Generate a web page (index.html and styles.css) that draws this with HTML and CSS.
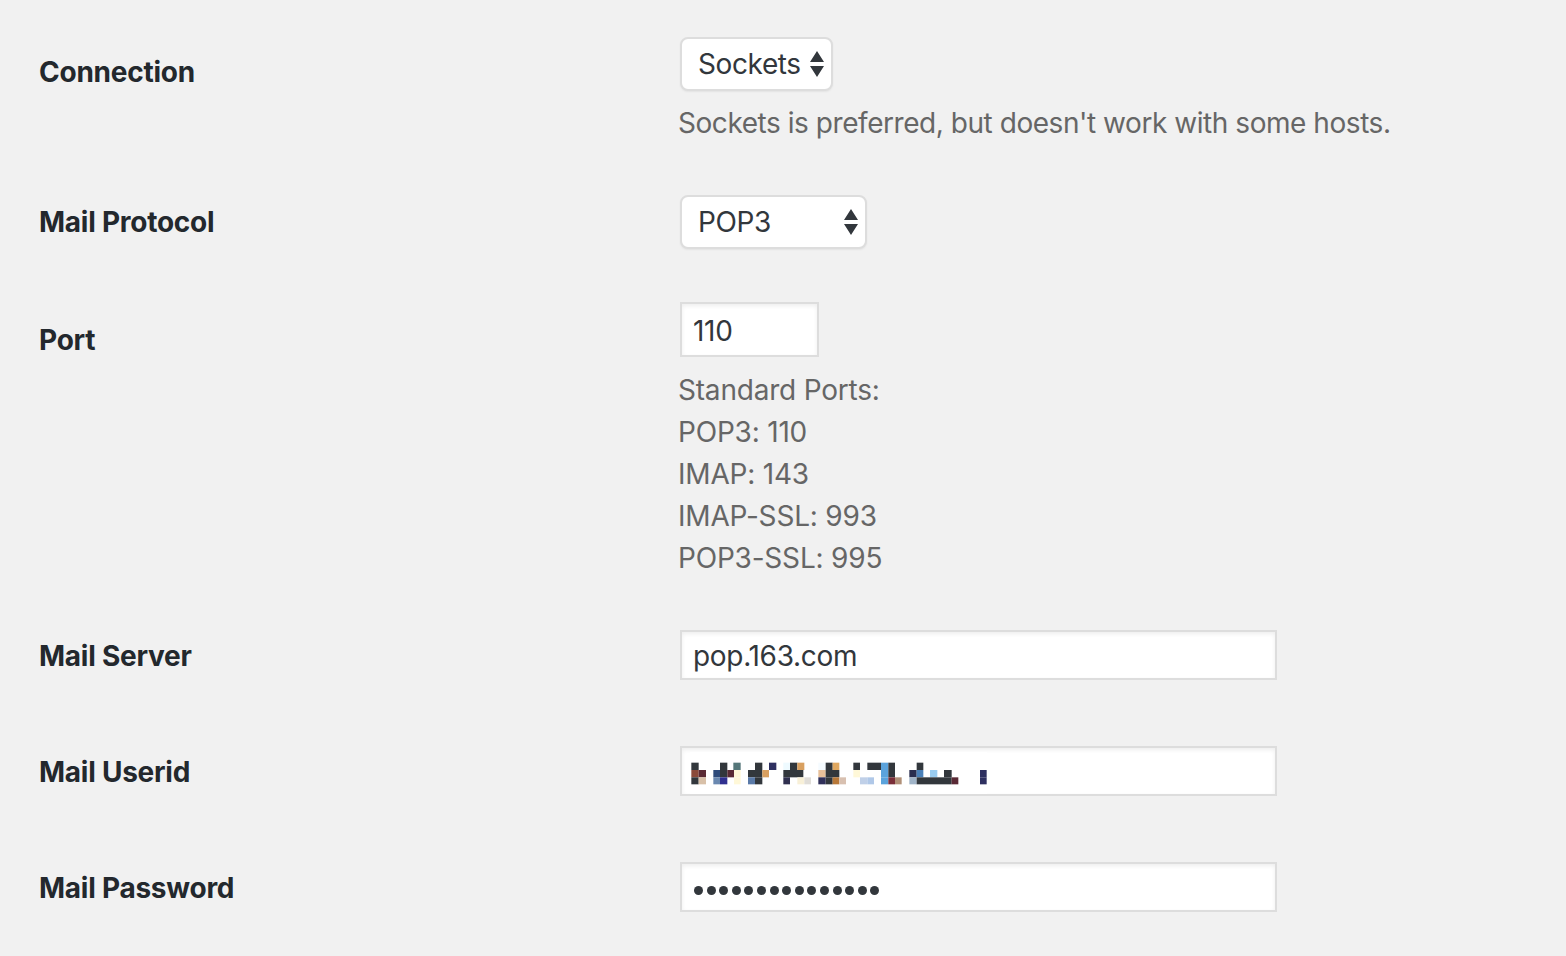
FILE: index.html
```html
<!DOCTYPE html>
<html>
<head>
<meta charset="utf-8">
<link rel="stylesheet" href="styles.css">
</head>
<body>
<div class="form">
  <div class="row row-1">
    <div class="label lab-1">Connection</div>
    <div class="field">
      <div class="select sel-sockets"><span>Sockets</span>
        <svg class="arrows" width="14" height="26" viewBox="0 0 14 26"><path d="M7 0 L14 11 L0 11 Z M0 15 L14 15 L7 26 Z" fill="#32373c"/></svg>
      </div>
      <p class="desc first">Sockets is preferred, but doesn't work with some hosts.</p>
    </div>
  </div>

  <div class="row row-2">
    <div class="label lab-2">Mail Protocol</div>
    <div class="field">
      <div class="select sel-pop"><span>POP3</span>
        <svg class="arrows" width="14" height="26" viewBox="0 0 14 26"><path d="M7 0 L14 11 L0 11 Z M0 15 L14 15 L7 26 Z" fill="#32373c"/></svg>
      </div>
    </div>
  </div>

  <div class="row row-3">
    <div class="label lab-3">Port</div>
    <div class="field">
      <div class="input port">110</div>
      <div class="desc ports">
        <p>Standard Ports:</p>
        <p>POP3: 110</p>
        <p>IMAP: 143</p>
        <p>IMAP-SSL: 993</p>
        <p>POP3-SSL: 995</p>
      </div>
    </div>
  </div>

  <div class="row row-4">
    <div class="label lab-in">Mail Server</div>
    <div class="field">
      <div class="input wide">pop.163.com</div>
    </div>
  </div>

  <div class="row row-5">
    <div class="label lab-in">Mail Userid</div>
    <div class="field">
      <div class="input wide mosaic-box">
        <svg class="mosaic" width="297" height="42" viewBox="60 36 891 126">
          <rect x="60" y="36" width="891" height="126" fill="#fff"/>
          <g>
            <rect x="64" y="68" width="22" height="22" fill="#32373c"/>
            <rect x="150" y="68" width="22" height="22" fill="#32373c"/>
            <rect x="190" y="68" width="22" height="22" fill="#55777a"/>
            <rect x="255" y="68" width="22" height="22" fill="#32373c"/>
            <rect x="297" y="68" width="22" height="22" fill="#2e3060"/>
            <rect x="340" y="68" width="20" height="22" fill="#eefaff"/>
            <rect x="360" y="68" width="22" height="22" fill="#32373c"/>
            <rect x="382" y="68" width="21" height="22" fill="#d9a060"/>
            <rect x="445" y="68" width="22" height="22" fill="#f5fbff"/>
            <rect x="467" y="68" width="21" height="22" fill="#32373c"/>
            <rect x="488" y="68" width="20" height="22" fill="#e0a860"/>
            <rect x="550" y="68" width="20" height="22" fill="#32373c"/>
            <rect x="592" y="68" width="41" height="22" fill="#32373c"/>
            <rect x="633" y="68" width="22" height="22" fill="#5ba3dc"/>
            <rect x="655" y="68" width="20" height="22" fill="#32373c"/>
            <rect x="740" y="68" width="20" height="22" fill="#32373c"/>

            <rect x="64" y="90" width="22" height="22" fill="#8b4a3a"/>
            <rect x="86" y="90" width="22" height="22" fill="#5a2a35"/>
            <rect x="130" y="90" width="20" height="22" fill="#2e4a7a"/>
            <rect x="150" y="90" width="22" height="22" fill="#32373c"/>
            <rect x="172" y="90" width="20" height="22" fill="#5a2a35"/>
            <rect x="192" y="90" width="20" height="22" fill="#fff8d8"/>
            <rect x="234" y="90" width="43" height="22" fill="#32373c"/>
            <rect x="277" y="90" width="20" height="22" fill="#d9a060"/>
            <rect x="340" y="90" width="60" height="22" fill="#32373c"/>
            <rect x="445" y="90" width="22" height="22" fill="#e8c09a"/>
            <rect x="467" y="90" width="41" height="22" fill="#32373c"/>
            <rect x="550" y="90" width="20" height="22" fill="#fff8d8"/>
            <rect x="633" y="90" width="22" height="22" fill="#5ba3dc"/>
            <rect x="655" y="90" width="20" height="22" fill="#32373c"/>
            <rect x="718" y="90" width="22" height="22" fill="#2a2e50"/>
            <rect x="740" y="90" width="20" height="22" fill="#4a80b8"/>
            <rect x="780" y="90" width="22" height="22" fill="#99ccf0"/>
            <rect x="822" y="90" width="23" height="22" fill="#32373c"/>
            <rect x="930" y="90" width="20" height="22" fill="#2e3060"/>

            <rect x="64" y="112" width="22" height="21" fill="#32373c"/>
            <rect x="86" y="112" width="22" height="21" fill="#d8c0a8"/>
            <rect x="130" y="112" width="20" height="21" fill="#6a88b0"/>
            <rect x="150" y="112" width="22" height="21" fill="#303090"/>
            <rect x="192" y="112" width="20" height="21" fill="#fff8d8"/>
            <rect x="234" y="112" width="21" height="21" fill="#5a7aa8"/>
            <rect x="255" y="112" width="22" height="21" fill="#32373c"/>
            <rect x="340" y="112" width="20" height="21" fill="#30304f"/>
            <rect x="382" y="112" width="21" height="21" fill="#f8f0d8"/>
            <rect x="403" y="112" width="20" height="21" fill="#e0ddd8"/>
            <rect x="445" y="112" width="22" height="21" fill="#30305a"/>
            <rect x="467" y="112" width="21" height="21" fill="#32373c"/>
            <rect x="488" y="112" width="20" height="21" fill="#b87838"/>
            <rect x="508" y="112" width="20" height="21" fill="#d8c0b0"/>
            <rect x="570" y="112" width="22" height="21" fill="#c0d0e8"/>
            <rect x="592" y="112" width="20" height="21" fill="#b0c8e8"/>
            <rect x="633" y="112" width="22" height="21" fill="#5ba3dc"/>
            <rect x="655" y="112" width="20" height="21" fill="#7a2e38"/>
            <rect x="675" y="112" width="20" height="21" fill="#b09078"/>
            <rect x="718" y="112" width="22" height="21" fill="#a0b4c8"/>
            <rect x="740" y="112" width="105" height="21" fill="#32373c"/>
            <rect x="845" y="112" width="20" height="21" fill="#5a2a35"/>
            <rect x="930" y="112" width="20" height="21" fill="#2e3060"/>
          </g>
        </svg>
      </div>
    </div>
  </div>

  <div class="row row-6">
    <div class="label lab-in">Mail Password</div>
    <div class="field">
      <div class="input wide pw">
        <span class="dots">
          <i></i><i></i><i></i><i></i><i></i><i></i><i></i><i></i><i></i><i></i><i></i><i></i><i></i><i></i><i></i>
        </span>
      </div>
    </div>
  </div>
</div>
</body>
</html>
```

FILE: styles.css
```css
* { box-sizing: border-box; }
html, body {
  margin: 0;
  padding: 0;
  background: #f1f1f1;
}
body {
  font-family: Inter, "Liberation Sans", sans-serif;
  color: #23282d;
  width: 1566px;
  height: 956px;
  overflow: hidden;
}
.form {
  padding-left: 39px;
}
.row {
  display: flex;
  align-items: flex-start;
}
.row-1 { padding-top: 37px; }
.row-2 { padding-top: 51px; }
.row-3 { padding-top: 53px; }
.row-4 { padding-top: 51px; }
.row-5 { padding-top: 66px; }
.row-6 { padding-top: 66px; }

.label {
  width: 641px;
  flex: none;
  font-size: 28px;
  line-height: 36px;
  font-weight: 700;
  color: #23282d;
  letter-spacing: -0.25px;
}
.lab-1 { padding-top: 17px; }
.lab-2 { padding-top: 9px; }
.lab-3 { padding-top: 20px; }
.lab-in { padding-top: 8px; }

.field {
  display: flex;
  flex-direction: column;
  align-items: flex-start;
}

.select {
  display: flex;
  align-items: center;
  justify-content: space-between;
  height: 54px;
  background: #fff;
  border: 2px solid #dddddd;
  border-radius: 8px;
  box-shadow: 0 1px 2px rgba(0,0,0,0.06);
  padding: 0 7px 0 16px;
  font-size: 28px;
  letter-spacing: -0.4px;
  color: #32373c;
}
.sel-sockets { width: 153px; }
.sel-pop { width: 187px; }
.arrows { flex: none; }

.desc {
  margin: 0 0 0 -2px;
  color: #666;
  font-size: 28px;
  line-height: 42px;
  letter-spacing: -0.45px;
}
.desc.first { margin-top: 11px; }
.ports { margin-top: 12px; letter-spacing: -0.2px; }
.ports p { margin: 0; }

.input {
  display: flex;
  align-items: center;
  background: #fff;
  border: 2px solid #dddddd;
  box-shadow: inset 0 2px 4px rgba(0,0,0,0.07);
  padding: 0 11px;
  font-size: 28px;
  letter-spacing: -0.3px;
  color: #32373c;
}
.port { width: 139px; height: 55px; padding-top: 3px; }
.wide { width: 597px; height: 50px; padding-top: 2px; }
.mosaic-box {
  padding: 4px 0 0 8px;
  align-items: flex-start;
}
.mosaic { display: block; }

.pw { padding-left: 12px; }
.dots {
  display: flex;
  gap: 3.6px;
  margin-top: 4px;
}
.dots i {
  display: block;
  width: 9px;
  height: 9px;
  border-radius: 50%;
  background: #32373c;
}
```
